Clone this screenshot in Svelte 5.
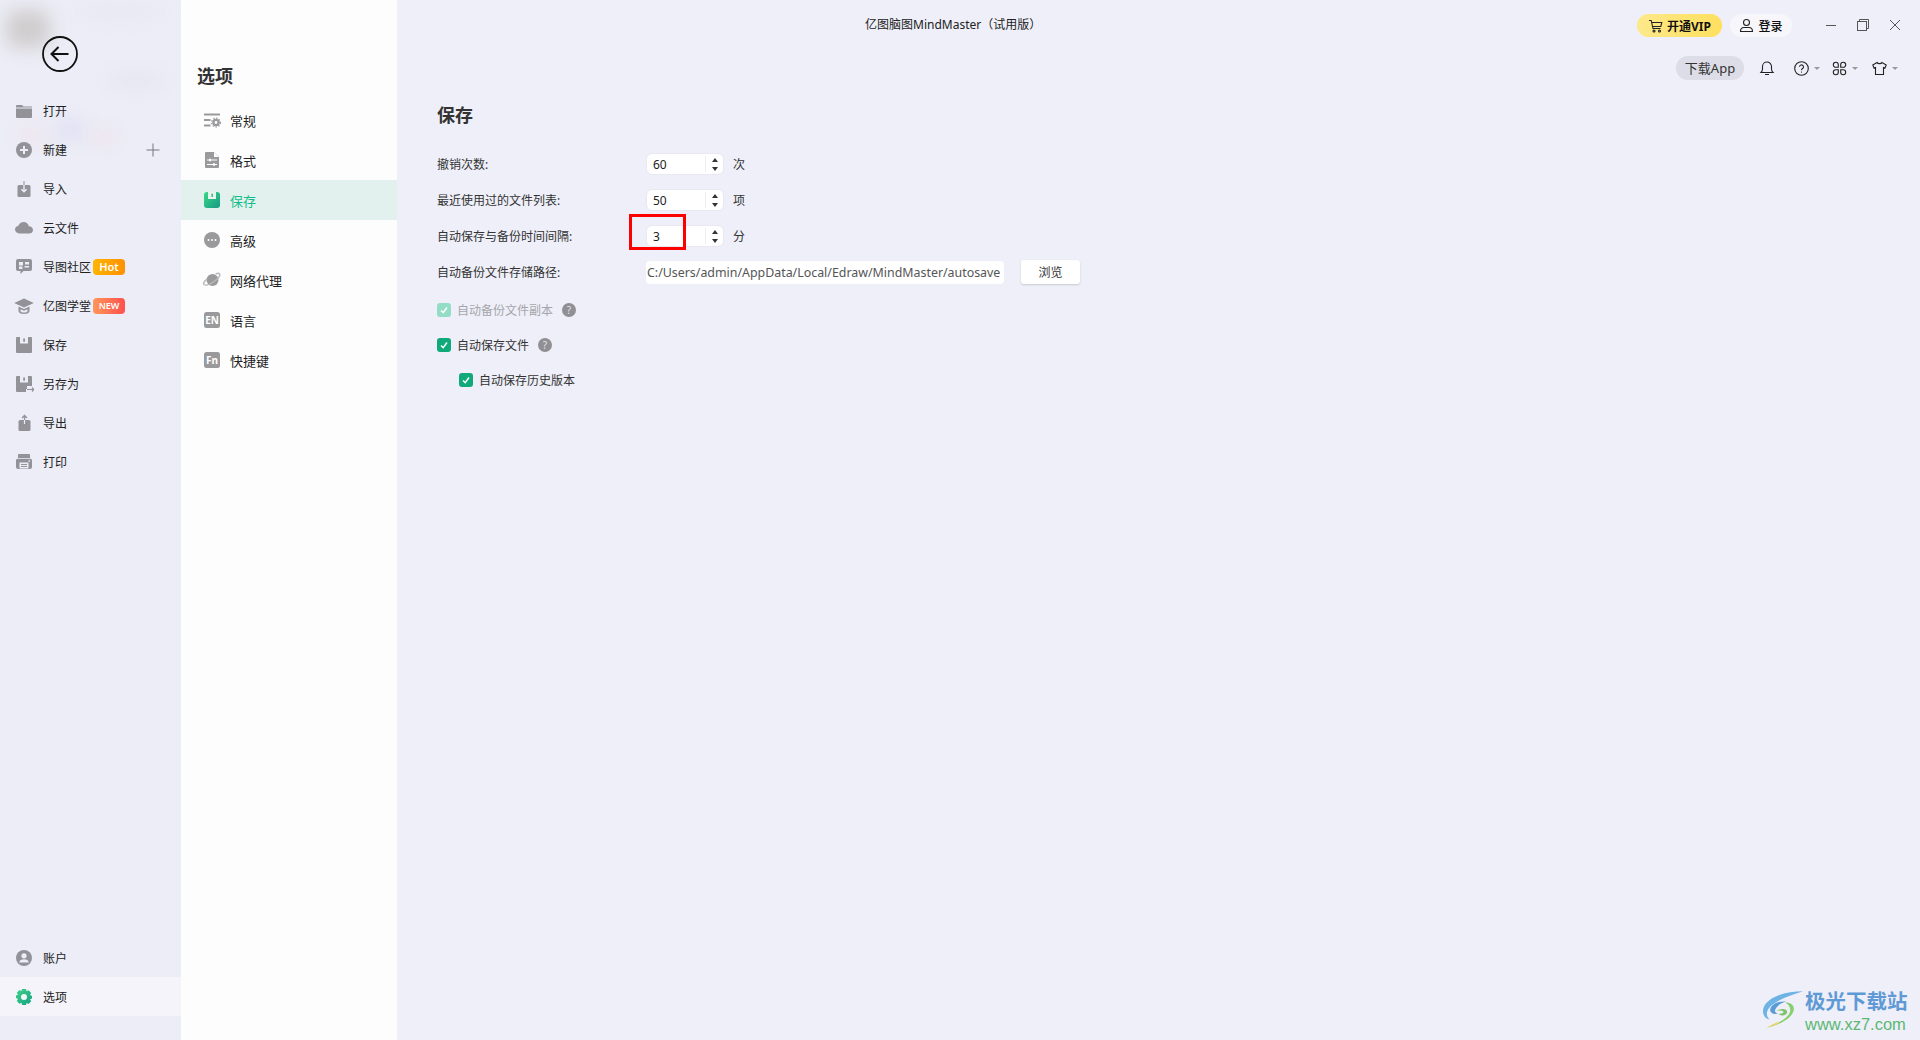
<script>
  const G = '#929298';
  const B = '#ecedf6';

  const icons = {
    folder: `<path fill="${G}" d="M2 5a1 1 0 0 1 1-1h5l1.600 1.600H18v1H2zM2 7.600h16V16a1 1 0 0 1-1 1H3a1 1 0 0 1-1-1z"/>`,
    add: `<circle cx="10" cy="10" r="8" fill="${G}"/><path stroke="${B}" stroke-width="2" d="M10 6v8M6 10h8"/>`,
    import: `<rect x="3.500" y="6" width="13" height="12" rx="1.500" fill="${G}"/><path stroke="${G}" stroke-width="1" d="M10 2v4"/><path fill="none" stroke="${B}" stroke-width="1.400" d="M10 6v6.500M7.400 10.200l2.600 2.600 2.600-2.600"/>`,
    cloud: `<path fill="${G}" d="M5.500 15.500C3 15.500 1 13.900 1 11.600c0-2 1.500-3.500 3.400-3.800C5.200 5.500 7.200 4 9.600 4c2.700 0 4.800 1.800 5.200 4.300 2.300.2 4.200 1.500 4.200 3.600 0 2.200-1.800 3.600-4 3.600z"/>`,
    community: `<path fill="${G}" d="M4 2h12a2 2 0 0 1 2 2v8a2 2 0 0 1-2 2H9.500l-3 3v-3H4a2 2 0 0 1-2-2V4a2 2 0 0 1 2-2z"/><path fill="${B}" d="M5 5h4v3.500H5zM11 5h4v2.500h-4zM5 9.500h3.500V12H5zM10.500 9h4.500v1.500h-4.500z"/>`,
    hat: `<path fill="${G}" d="M10 2.500l9.800 4.500L10 11.500.2 7z"/><path fill="${G}" d="M4.500 10.500l5.500 2.500 5.500-2.500V15c0 2-2.500 3-5.500 3s-5.500-1-5.500-3z"/><path fill="${B}" d="M6.500 13.200l3.500 1.500 3.500-1.500V15c0 .8-1.500 1.500-3.500 1.500S6.500 15.800 6.500 15z"/>`,
    save: `<path fill="${G}" d="M3 2h14a1 1 0 0 1 1 1v14a1 1 0 0 1-1 1H3a1 1 0 0 1-1-1V3a1 1 0 0 1 1-1z"/><rect x="6" y="2" width="8" height="6.500" fill="${B}"/><rect x="9.200" y="3.500" width="1.800" height="3.200" fill="${G}"/>`,
    saveas: `<path fill="${G}" d="M3 2h14a1 1 0 0 1 1 1v9h-5v3h-1v3H3a1 1 0 0 1-1-1V3a1 1 0 0 1 1-1z"/><rect x="6" y="2" width="8" height="6.500" fill="${B}"/><rect x="9.200" y="3.500" width="1.800" height="3.200" fill="${G}"/><path fill="none" stroke="${G}" stroke-width="1.200" d="M13 15.500h7M18 13.500l2 2-2 2"/>`,
    export: `<rect x="4.500" y="7" width="12" height="11" rx="1.500" fill="${G}"/><path fill="none" stroke="${G}" stroke-width="1.300" d="M10.500 7V2.500M8 5l2.500-2.500L13 5"/><path stroke="${B}" stroke-width="1.200" d="M10.500 7v4"/>`,
    print: `<path fill="${G}" d="M5 2h10a1 1 0 0 1 1 1v3H4V3a1 1 0 0 1 1-1zM3.500 6.800h13A1.500 1.500 0 0 1 18 8.300V15a2 2 0 0 1-2 2H4a2 2 0 0 1-2-2V8.300a1.500 1.500 0 0 1 1.500-1.500z"/><rect x="5.500" y="10.500" width="9" height="6" fill="${B}"/><path stroke="${G}" d="M7 12.500h6M7 14.500h6"/><rect x="14.500" y="8.300" width="1.600" height="1.400" fill="${B}"/>`,
    account: `<circle cx="10" cy="10" r="8" fill="${G}"/><circle cx="10" cy="7.800" r="2.600" fill="${B}"/><path fill="${B}" d="M5.200 14.500c.3-2.200 2.200-3.300 4.800-3.300s4.500 1.100 4.800 3.300z"/>`,
    gear: `<defs><linearGradient id="gr" x1="0" y1="0" x2="1" y2="1"><stop offset="0" stop-color="#42d18a"/><stop offset="1" stop-color="#13a282"/></linearGradient></defs><path fill="url(#gr)" fill-rule="evenodd" d="M8 2h4l.6 2.300 2-1 2.600 2.800-1.200 2 2 .9v2.400l-2 .9 1.200 2-2.600 2.800-2-1L12 18H8l-.6-2.300-2 1-2.600-2.800 1.200-2-2-.9V8.600l2-.9-1.200-2 2.600-2.800 2 1zM10 7a3 3 0 1 0 0 6 3 3 0 0 0 0-6z"/>`,
  };

  const N = '#9a9a9c';
  const W = '#fdfdfe';
  const optIcons = {
    general: `<path stroke="${N}" stroke-width="2.200" d="M2 4.500h16M2 10h6.500M2 15.500h6.500"/><circle cx="14" cy="12.500" r="2.600" fill="none" stroke="${N}" stroke-width="2.400"/><circle cx="14" cy="12.500" r="4.400" fill="none" stroke="${N}" stroke-width="1.200" stroke-dasharray="1.500 1.400"/>`,
    format: `<path fill="${N}" d="M4 2h8l5 5v10a1 1 0 0 1-1 1H4a1 1 0 0 1-1-1V3a1 1 0 0 1 1-1z"/><path fill="${W}" d="M12 2l5 5h-5z"/><path stroke="${W}" stroke-width="1.200" d="M5 10h10M5 14.500h10"/><path stroke="${W}" stroke-width="2" d="M8 8.800v2.400M12 13.300v2.400"/>`,
    save: `<defs><linearGradient id="gs" x1="0" y1="0" x2="1" y2="1"><stop offset="0" stop-color="#3cd888"/><stop offset="1" stop-color="#159a84"/></linearGradient></defs><rect x="2" y="2" width="16" height="16" rx="3" fill="url(#gs)"/><rect x="6" y="2" width="8" height="7" fill="#e8f6ee"/><rect x="9.400" y="3.600" width="1.600" height="3.400" fill="#3cbf8a"/>`,
    advanced: `<circle cx="10" cy="10" r="8" fill="${N}"/><circle cx="6.500" cy="10" r="1" fill="${W}"/><circle cx="10" cy="10" r="1" fill="${W}"/><circle cx="13.500" cy="10" r="1" fill="${W}"/>`,
    proxy: `<circle cx="10.500" cy="10" r="6" fill="${N}"/><path fill="none" stroke="#b9b9bb" stroke-width="1.500" d="M5 9c-3 2.500-4 4.500-3 5.500 1.500 1.300 6-.3 10-3 4-2.800 6.500-6 5.500-7.500-.6-.9-2.300-.7-4 .2"/>`,
    language: `<rect x="2" y="2" width="16" height="16" rx="2.500" fill="${N}"/>`,
    hotkey: `<rect x="2" y="2" width="16" height="16" rx="2.500" fill="${N}"/>`,
  };

  const menu = [
    { icon: 'folder', label: '打开' },
    { icon: 'add', label: '新建', plus: true },
    { icon: 'import', label: '导入' },
    { icon: 'cloud', label: '云文件' },
    { icon: 'community', label: '导图社区', badge: 'Hot' },
    { icon: 'hat', label: '亿图学堂', badge: 'NEW' },
    { icon: 'save', label: '保存' },
    { icon: 'saveas', label: '另存为' },
    { icon: 'export', label: '导出' },
    { icon: 'print', label: '打印' },
  ];

  const options = [
    { icon: 'general', label: '常规' },
    { icon: 'format', label: '格式' },
    { icon: 'save', label: '保存', active: true },
    { icon: 'advanced', label: '高级' },
    { icon: 'proxy', label: '网络代理' },
    { icon: 'language', label: '语言', tag: 'EN' },
    { icon: 'hotkey', label: '快捷键', tag: 'Fn' },
  ];

  const spinners = [
    { label: '撤销次数:', value: '60', unit: '次' },
    { label: '最近使用过的文件列表:', value: '50', unit: '项' },
    { label: '自动保存与备份时间间隔:', value: '3', unit: '分' },
  ];
</script>

<div class="window">
  <aside class="sidebar">
    <div class="blur b1"></div>
    <div class="blur b2"></div>
    <div class="blur b3"></div>
    <div class="blur b4"></div>
    <div class="blur b5"></div>
    <div class="blur b6"></div>

    <button class="back" aria-label="返回">
      <svg width="36" height="36" viewBox="0 0 36 36" fill="none" stroke="#111" stroke-width="1.800">
        <circle cx="18" cy="18" r="17" />
        <path d="M9.500 18h17M16.500 11l-7 7 7 7" stroke-width="2" />
      </svg>
    </button>

    <nav class="menu">
      {#each menu as m}
        <div class="menu-row">
          <svg class="ico" width="20" height="20" viewBox="0 0 20 20">{@html icons[m.icon]}</svg>
          <span>{m.label}</span>
          {#if m.badge}
            <span class="badge" class:hot={m.badge === 'Hot'} class:new={m.badge === 'NEW'}>{m.badge}</span>
          {/if}
          {#if m.plus}
            <svg class="plus" width="14" height="14" viewBox="0 0 14 14"><path stroke="#77777c" d="M7 0.500v13M0.500 7h13" /></svg>
          {/if}
        </div>
      {/each}
    </nav>

    <div class="menu bottom">
      <div class="menu-row">
        <svg class="ico" width="20" height="20" viewBox="0 0 20 20">{@html icons.account}</svg>
        <span>账户</span>
      </div>
      <div class="menu-row current">
        <svg class="ico" width="20" height="20" viewBox="0 0 20 20">{@html icons.gear}</svg>
        <span>选项</span>
      </div>
    </div>
  </aside>

  <section class="options">
    <h2>选项</h2>
    {#each options as o}
      <div class="opt-row" class:active={o.active}>
        <span class="opt-ico">
          <svg width="20" height="20" viewBox="0 0 20 20">{@html optIcons[o.icon]}</svg>
          {#if o.tag}<b>{o.tag}</b>{/if}
        </span>
        <span>{o.label}</span>
      </div>
    {/each}
  </section>

  <main class="main">
    <header class="titlebar">
      <div class="title">亿图脑图MindMaster（试用版）</div>
      <div class="vip">
        <svg width="16" height="16" viewBox="0 0 16 16" fill="none" stroke="#222" stroke-width="1.100">
          <path d="M1 2.500h2.200l1.800 8h7.500M3.600 4.500h10.200l-1 4H4.500" />
          <circle cx="6" cy="13" r="1" />
          <circle cx="11.500" cy="13" r="1" />
        </svg>
        <span>开通VIP</span>
      </div>
      <div class="login">
        <svg width="15" height="15" viewBox="0 0 15 15" fill="none" stroke="#222" stroke-width="1.100">
          <circle cx="7.500" cy="4.500" r="3" />
          <path d="M1.500 13.500c0-2.500 1.500-4 3.500-4h5c2 0 3.500 1.500 3.500 4z" />
        </svg>
        <span>登录</span>
      </div>
      <div class="winctl">
        <svg width="10" height="12" viewBox="0 0 10 12"><path stroke="#555" d="M0 6.500h10" /></svg>
        <svg width="12" height="12" viewBox="0 0 12 12" fill="none" stroke="#555"><rect x="0.500" y="2.500" width="9" height="9" /><path d="M2.500 2.500v-2h9v9h-2" /></svg>
        <svg width="10" height="12" viewBox="0 0 10 12"><path stroke="#555" d="M0 1l10 10M10 1L0 11" /></svg>
      </div>
    </header>

    <div class="toolbar">
      <div class="dl">下载App</div>
      <svg class="bell" width="16" height="16" viewBox="0 0 16 16" fill="none" stroke="#222" stroke-width="1.100">
        <path d="M2 12.500c1-1 1.500-2 1.500-3.500V6.500a4.500 4.500 0 0 1 9 0V9c0 1.500.5 2.500 1.500 3.500zM6 14.500h4" />
      </svg>
      <div class="tool first">
        <svg width="15" height="15" viewBox="0 0 15 15" fill="none" stroke="#222" stroke-width="1.100">
          <circle cx="7.500" cy="7.500" r="6.800" />
          <path d="M5.500 5.800a2 2 0 1 1 3 1.800c-.7.400-1 .8-1 1.600" />
          <path d="M7.500 10.600v1" />
        </svg>
        <i class="caret"></i>
      </div>
      <div class="tool second">
        <svg width="15" height="15" viewBox="0 0 15 15" fill="none" stroke="#222" stroke-width="1.100">
          <path d="M6.300 6.300H3.800a2.500 2.500 0 1 1 2.500-2.500zM8.700 6.300h2.500a2.500 2.500 0 1 0-2.500-2.500zM6.300 8.700H3.800a2.500 2.500 0 1 0 2.500 2.500zM8.700 8.700h2.500a2.500 2.500 0 1 1-2.500 2.500z" />
        </svg>
        <i class="caret"></i>
      </div>
      <div class="tool">
        <svg width="15" height="15" viewBox="0 0 15 15" fill="none" stroke="#222" stroke-width="1.100">
          <path d="M5 1.500L.8 4l1.200 3 1.500-.5V13.500h8V6.500l1.500.5 1.200-3L10 1.500c-.5 1.500-4.500 1.500-5 0z" />
        </svg>
        <i class="caret"></i>
      </div>
    </div>

    <div class="panel">
      <h1>保存</h1>

      {#each spinners as s}
        <div class="field">
          <label>{s.label}</label>
          <div class="spin">
            <span class="val">{s.value}</span>
            <span class="sep"></span>
            <span class="arrows"><i class="up"></i><i class="down"></i></span>
          </div>
          <span class="unit">{s.unit}</span>
        </div>
      {/each}

      <div class="field">
        <label>自动备份文件存储路径:</label>
        <div class="path">C:/Users/admin/AppData/Local/Edraw/MindMaster/autosave</div>
        <button class="browse">浏览</button>
      </div>

      <div class="check disabled">
        <span class="box"><svg width="14" height="14" viewBox="0 0 14 14"><path fill="none" stroke="#fff" stroke-width="1.500" d="M4 7.500l2.200 2.200L10 4.500" /></svg></span>
        <span>自动备份文件副本</span>
        <span class="help">?</span>
      </div>
      <div class="check">
        <span class="box"><svg width="14" height="14" viewBox="0 0 14 14"><path fill="none" stroke="#fff" stroke-width="1.500" d="M4 7.500l2.200 2.200L10 4.500" /></svg></span>
        <span>自动保存文件</span>
        <span class="help">?</span>
      </div>
      <div class="check sub">
        <span class="box"><svg width="14" height="14" viewBox="0 0 14 14"><path fill="none" stroke="#fff" stroke-width="1.500" d="M4 7.500l2.200 2.200L10 4.500" /></svg></span>
        <span>自动保存历史版本</span>
      </div>
    </div>
  </main>

  <!-- red annotation drawn over the screenshot -->
  <div class="mark"></div>

  <div class="watermark">
    <svg width="45" height="42" viewBox="0 0 48 42" fill="none">
      <path d="M46 1C30 1 12 5 5 16c-4 7-1 14 5 15-5-5-3-12 5-17C24 8 36 4 46 1z" fill="#6db3e6" />
      <path d="M28 12c-8-1-16 3-17 8-1 4 4 6 8 5-3-1-4-3-2-6 2-3 6-6 11-7z" fill="#5a9bd8" />
      <path d="M17 22c5-3 12-3 12 1 0 4-8 5-9 2 3 0 5-1 5-2 0-1-4-2-8-1z" fill="#7fc36b" />
      <path d="M27 13c8 0 11 5 8 11-4 8-18 14-28 16 10-4 22-9 25-17 1-4-1-8-5-10z" fill="#85cf6e" />
      <path d="M7 40c6-2 10-3 14-5l-3-1c-4 2-8 4-11 6z" fill="#ecd36a" />
    </svg>
    <div class="wm-text">
      <div class="wm-cn">极光下载站</div>
      <div class="wm-url">www.xz7.com</div>
    </div>
  </div>
</div>

<style>
  :global(body) {
    margin: 0;
    background: #eeeff8;
  }

  .window {
    position: relative;
    display: flex;
    height: 100vh;
    overflow: hidden;
    font-family: "Noto Sans", "Noto Sans CJK SC", sans-serif;
    font-size: 12px;
    color: #222;
  }

  /* left menu */
  .sidebar {
    position: relative;
    width: 181px;
    flex: none;
    display: flex;
    flex-direction: column;
    background: #ecedf6;
    overflow: hidden;
  }
  .blur {
    position: absolute;
    border-radius: 50%;
    filter: blur(9px);
  }
  .b1 { left: 6px; top: 10px; width: 44px; height: 38px; background: #d0cdce; border-radius: 12px; }
  .b2 { left: 16px; top: 132px; width: 30px; height: 8px; background: #f3dbe3; }
  .b3 { left: 58px; top: 120px; width: 24px; height: 20px; background: #dcdcf3; }
  .b4 { left: 90px; top: 133px; width: 26px; height: 8px; background: #f5dae2; }
  .b5 { left: 105px; top: 77px; width: 62px; height: 8px; background: #dfe0ee; }
  .b6 { left: 75px; top: 8px; width: 90px; height: 8px; background: #e4e5f0; }

  .back {
    position: relative;
    align-self: flex-start;
    margin: 36px 0 0 42px;
    padding: 0;
    width: 36px;
    height: 36px;
    border: none;
    background: none;
    display: block;
  }
  .back svg { display: block; }

  .menu { position: relative; }
  .sidebar > nav { margin-top: 19px; }
  .bottom { margin-top: auto; margin-bottom: 24px; }
  .menu-row {
    display: flex;
    align-items: center;
    height: 39px;
    padding-left: 14px;
    font-size: 12px;
    color: #222;
  }
  .ico { flex: none; margin-right: 9px; }
  .current { background: #f5f4fa; }
  .badge {
    margin-left: 2px;
    width: 32px;
    height: 16px;
    line-height: 16px;
    border-radius: 4px;
    color: #fff;
    text-align: center;
    font-weight: 600;
  }
  .hot { font-size: 11px; background: linear-gradient(90deg, #ffb400, #ff9000); }
  .new { font-size: 9px; background: linear-gradient(90deg, #ff9658, #ff5050); }
  .plus { margin-left: auto; margin-right: 21px; }

  /* options column */
  .options {
    width: 216px;
    flex: none;
    background: #fdfdfe;
  }
  .options h2 {
    margin: 0;
    padding: 63px 0 0 16px;
    height: 37px;
    line-height: 26px;
    font-size: 18px;
    font-weight: 700;
    color: #333;
  }
  .opt-row {
    display: flex;
    align-items: center;
    height: 40px;
    padding-left: 21px;
    font-size: 13px;
    color: #222;
  }
  .opt-ico {
    position: relative;
    width: 20px;
    height: 20px;
    margin-right: 8px;
  }
  .opt-ico svg { display: block; }
  .opt-ico b {
    position: absolute;
    inset: 0;
    text-align: center;
    line-height: 20px;
    font-size: 10px;
    color: #fff;
    font-weight: 700;
  }
  .active {
    background: #e2f1ed;
    color: #12bd8a;
  }

  /* right side */
  .main {
    flex: 1;
    min-width: 0;
    display: flex;
    flex-direction: column;
  }
  .titlebar {
    display: flex;
    align-items: flex-start;
    height: 56px;
    box-sizing: border-box;
    padding-top: 14px;
  }
  .title {
    margin-left: 468px;
    width: 175px;
    line-height: 22px;
    white-space: nowrap;
    font-size: 12px;
    color: #222;
    flex: none;
  }
  .vip {
    margin-left: auto;
    display: flex;
    align-items: center;
    gap: 3px;
    justify-content: center;
    width: 85px;
    height: 23px;
    border-radius: 12px;
    background: linear-gradient(90deg, #fde98a, #ffdf5e);
    font-weight: 700;
    font-size: 12px;
    color: #111;
  }
  .login {
    margin-left: 8px;
    display: flex;
    align-items: center;
    justify-content: center;
    gap: 4px;
    width: 62px;
    height: 23px;
    border-radius: 12px;
    background: #f6f6fb;
    font-weight: 500;
    color: #111;
  }
  .winctl {
    margin: 2px 20px 0 34px;
    display: flex;
    align-items: center;
    gap: 21px;
    height: 18px;
  }

  .toolbar {
    display: flex;
    align-items: center;
    justify-content: flex-end;
    height: 24px;
    padding-right: 22px;
  }
  .dl {
    width: 68px;
    height: 24px;
    line-height: 24px;
    text-align: center;
    border-radius: 12px;
    background: #dcdde6;
    color: #333;
    font-size: 13px;
  }
  .bell { margin-left: 15px; }
  .tool {
    margin-left: 13.5px;
    display: flex;
    align-items: center;
    gap: 5.5px;
  }
  .tool.first { margin-left: 18.5px; }
  .tool.second { margin-left: 11.5px; }
  .caret {
    width: 0;
    height: 0;
    border: 3px solid transparent;
    border-top: 3px solid #999;
    border-bottom: none;
  }

  .panel { padding: 12px 0 0 40px; }
  .panel h1 {
    margin: 0;
    height: 54px;
    font-size: 18px;
    line-height: 46px;
    font-weight: 700;
    color: #333;
  }
  .field {
    display: flex;
    align-items: center;
    height: 36px;
  }
  label { width: 209px; flex: none; color: #333; }
  .spin {
    display: flex;
    align-items: center;
    width: 78px;
    height: 22px;
    box-sizing: border-box;
    background: #fff;
    border: 1px solid #e8e8f0;
    border-radius: 6px;
    padding-left: 6px;
  }
  .val { flex: 1; }
  .sep { width: 1px; height: 16px; background: #ececf2; }
  .arrows {
    width: 17px;
    display: flex;
    flex-direction: column;
    align-items: center;
    gap: 5px;
  }
  .arrows i { width: 0; height: 0; border-left: 3px solid transparent; border-right: 3px solid transparent; }
  .up { border-bottom: 4px solid #333; }
  .down { border-top: 4px solid #333; }
  .unit { margin-left: 9px; color: #333; }
  .path {
    width: 358px;
    height: 23px;
    line-height: 23px;
    background: #fff;
    border-radius: 4px;
    padding-left: 1px;
    box-sizing: border-box;
    white-space: nowrap;
    overflow: hidden;
    color: #555;
    font-size: 12.4px;
  }
  .browse {
    margin-left: 17px;
    width: 59px;
    height: 24px;
    border: none;
    border-radius: 3px;
    background: #fff;
    box-shadow: 0 1px 2px #c9c9d2;
    font: inherit;
    color: #333;
    padding: 0;
  }
  .check {
    display: flex;
    align-items: center;
    height: 35px;
    color: #333;
  }
  .field + .check { margin-top: 2px; }
  .box {
    width: 14px;
    height: 14px;
    border-radius: 3px;
    background: #0fa97a;
    margin-right: 6px;
    flex: none;
  }
  .box svg { display: block; }
  .disabled { color: #a5a5ab; }
  .disabled .box { background: #93dcc6; }
  .sub { padding-left: 22px; }
  .help {
    margin-left: 9px;
    width: 14px;
    height: 14px;
    line-height: 14px;
    border-radius: 50%;
    background: #8f8f94;
    color: #e4e4e8;
    text-align: center;
    font-size: 10px;
  }

  .mark {
    position: absolute;
    left: 629px;
    top: 214px;
    width: 57px;
    height: 36px;
    box-sizing: border-box;
    border: 3px solid #f00;
  }

  .watermark {
    position: absolute;
    left: 1760px;
    top: 989px;
    display: flex;
    align-items: flex-start;
    font-family: "Liberation Sans", "Noto Sans CJK SC", sans-serif;
  }
  .wm-text { margin-top: 1px; }
  .wm-cn {
    font-size: 20.5px;
    line-height: 24px;
    font-weight: 700;
    color: #5f9ad6;
  }
  .wm-url {
    font-size: 16.5px;
    line-height: 20px;
    color: #5cb874;
  }
</style>
